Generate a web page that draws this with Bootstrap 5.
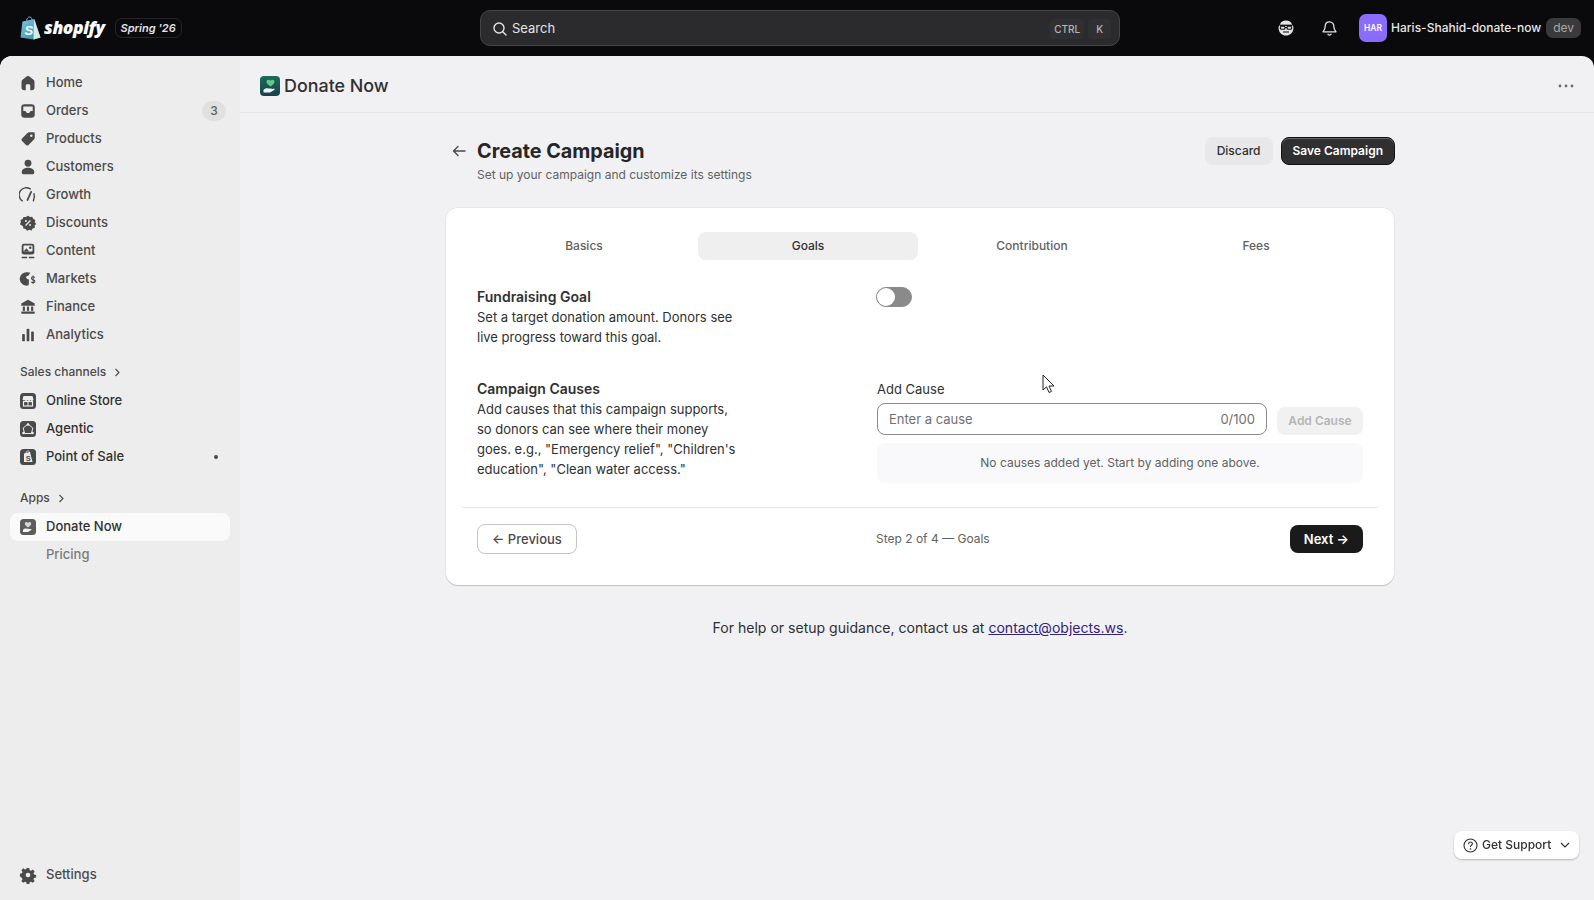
<!DOCTYPE html>
<html lang="en">
<head>
  <meta charset="UTF-8">
  <title>Donate Now - Create Campaign</title>
  <link href="https://cdn.jsdelivr.net/npm/bootstrap@5.3.0/dist/css/bootstrap.min.css" rel="stylesheet">
  <style>
    html, body { height: 100%; }
    body { font-family: Inter, "Liberation Sans", sans-serif; font-size: 13px; background: #0a0a0c; color: #303030; overflow: hidden; }
    svg { display: block; flex-shrink: 0; }

    .topbar { height: 56px; padding-left: 20px; padding-right: 13px; color: #e3e3e3; }
    .top-left { width: 460px; }
    .wordmark { font-family: "Open Sans", "Liberation Sans", sans-serif; font-weight: 800; font-style: italic; font-size: 17.5px; color: #fff; margin-left: 3px; letter-spacing: -.4px; line-height: 1; }
    .season { margin-left: 10px; border: 1px solid #26262a; border-radius: 7px; height: 20px; padding: 0 5px; font-size: 11px; font-weight: 600; font-style: italic; line-height: 18px; color: #e3e3e3; }
    .search-box { width: 640px; height: 36px; background: #2b2b2d; border: 1px solid #444447; border-radius: 10px; padding: 1px 8px 0 11px; color: #e3e3e3; font-size: 13px; }
    .search-box svg { margin-right: 4px; }
    .key { font-size: 10px; font-weight: 500; color: #b5b5b5; background: #303032; border-radius: 4px; padding: 3px 4px; line-height: 14px; }
    .top-right { margin-left: auto; }
    .avatar { width: 28px; height: 28px; border-radius: 7px; background: #8a6cff; color: #fff; font-size: 8.5px; font-weight: 600; }
    .shop-name { font-size: 12px; font-weight: 500; color: #e8e8e8; margin-left: 4px; }
    .dev-tag { margin-left: 5px; height: 20px; padding: 0 7px; border-radius: 7px; background: #3a3a3c; color: #a8a8a8; font-size: 12px; line-height: 20px; }

    .shell { flex: 1; min-height: 0; border-radius: 12px 12px 0 0; overflow: hidden; background: #f1f1f4; }
    .side { width: 240px; background: #ededed; padding: 13px 10px 11px; }
    .side-row { height: 28px; padding-left: 10px; padding-right: 4px; border-radius: 8px; color: #4a4a4a; font-weight: 500; font-size: 13px; text-decoration: none; }
    .side-row svg { margin-right: 10px; }
    .side-row svg.glyph { margin-left: -1px; margin-right: 9px; }
    .side-row.dark { color: #303030; }
    .side-row.on { background: #fafafa; color: #303030; }
    .side-row.sub { color: #7b7b7b; padding-left: 36px; }
    .side-head { height: 20px; padding-left: 10px; font-size: 12px; font-weight: 500; color: #4a4a4a; }
    .count { width: 24px; height: 20px; border-radius: 10px; background: #e0e0e0; color: #616161; font-size: 12px; }
    .dot { width: 4px; height: 4px; border-radius: 50%; background: #4a4a4a; margin-right: 8px; }

    .main-area { min-width: 0; }
    .app-head { height: 57px; padding: 4px 20px 0 20px; border-bottom: 1px solid #e6e6e8; }
    .app-title { font-size: 17.9px; font-weight: 500; color: #303030; margin-left: 4px; }
    .page-wrap { width: 948px; margin-left: 206px; }
    .page-head { padding: 24px 0 0 6px; }
    .page-title { font-size: 19.8px; font-weight: 700; line-height: 28px; margin: 0; color: #262626; }
    .page-sub { font-size: 12px; line-height: 20px; color: #616161; }
    .head-actions { margin-right: -1px; }
    .btn-grey { height: 28px; padding: 0 12px; background: #e8e8e8; border: 0; border-radius: 8px; font-size: 12px; font-weight: 500; color: #303030; }
    .btn-save { height: 28px; padding: 0 11px; background: #303030; border: 1px solid #111; border-radius: 8px; font-size: 12px; font-weight: 600; color: #fff; box-shadow: inset 0 1px 0 rgba(255,255,255,.25); }

    .form-card { margin-top: 23px; background: #fff; border: 0; border-radius: 12px; box-shadow: 0 1px 1px rgba(0,0,0,.18), 0 0 0 1px rgba(0,0,0,.03); padding: 24px 0 31px; }
    .step-tabs { margin: 0 28px; gap: 4px; }
    .step-tabs .nav-link { flex: 1; height: 28px; padding: 0; border-radius: 8px; font-size: 12px; font-weight: 500; color: #616161; line-height: 28px; text-align: center; }
    .step-tabs .nav-link.active { background: #efefef; color: #303030; }
    .form-row { margin: 0 31px; }
    .left-col { width: 400px; flex-shrink: 0; }
    .left-col p { margin: 0; width: 264px; font-size: 13px; line-height: 20px; color: #303030; }
    .left-col h3 { margin: 0; font-size: 14px; font-weight: 600; line-height: 20px; color: #303030; }
    .toggle { width: 36px; height: 20px; margin-left: -1px; border-radius: 10px; background: #8a8a8a; border: 1px solid #8a8a8a; padding: 0; }
    .toggle span { display: block; width: 18px; height: 18px; border-radius: 50%; background: #fff; }
    .field-label { font-size: 13px; line-height: 20px; margin-bottom: 4px; }
    .cause-input { height: 32px; border: 1px solid #8a8a8a; border-radius: 8px; padding: 1px 11px 0; color: #707070; font-size: 13px; background: #fff; }
    .cause-add, .cause-add:disabled { height: 28px; width: 86px; margin-left: 10px; padding: 0; background: #f1f1f1; border: 0; border-radius: 8px; font-size: 12px; font-weight: 600; color: #b5b5b5; opacity: 1; }
    .empty-box { height: 40px; margin-top: 8px; border-radius: 8px; background: #f9f9fb; font-size: 12px; color: #616161; }
    .card-rule { margin: 24px 16px 16px; height: 1px; background: #e6e6e6; }
    .btn-prev { height: 30px; padding: 1px 14px 0; background: #fff; border: 1px solid #c4c4c4; border-radius: 8px; font-size: 13px; font-weight: 500; color: #4a4a4a; }
    .step-text { font-size: 12px; color: #616161; margin-left: -1px; }
    .btn-next { height: 28px; padding: 1px 14px 0; background: #1a1a1a; border: 0; border-radius: 8px; font-size: 13px; font-weight: 600; color: #fff; }
    .help-line { margin-top: 33px; font-size: 14.05px; line-height: 20px; color: #303030; text-align: center; }
    .help-line a { color: #33237a; }

    .support-pill { position: fixed; left: 1454px; top: 831px; width: 125px; height: 28px; background: #fff; border-radius: 8px; box-shadow: 0 1px 2px rgba(0,0,0,.25); font-size: 12px; font-weight: 500; color: #303030; padding: 0 9px; }
    .pointer { position: fixed; left: 1042px; top: 374px; }
  </style>
</head>
<body class="d-flex flex-column">

  <header class="topbar d-flex align-items-center flex-shrink-0">
    <div class="top-left d-flex align-items-center">
      <svg width="21" height="24" viewBox="0 0 21 24">
        <defs><linearGradient id="bagFill" x1="0" y1="0" x2="1" y2="1"><stop offset="0" stop-color="#7fc4e8"/><stop offset="1" stop-color="#2f8f9f"/></linearGradient></defs>
        <path d="M2.500 5.500 L14.500 3 L20.500 21.500 L13.500 23.500 L0.500 21.500 Z" fill="url(#bagFill)"/>
        <path d="M14 3.200 L20.500 21.500 L13.500 23.500 Z" fill="#d8e8e4"/>
        <path d="M6.500 5.500 C6.800 2 8.500 .8 10 1 C11.500 1.200 12 3 12 4.500" fill="none" stroke="#7fb6d6" stroke-width="1"/>
        <text x="4.500" y="18.500" font-family="Liberation Sans, sans-serif" font-size="13" font-weight="700" font-style="italic" fill="#fff">S</text>
      </svg>
      <span class="wordmark">shopify</span>
      <span class="season">Spring '26</span>
    </div>
    <div class="search-box d-flex align-items-center">
      <svg width="16" height="16" viewBox="0 0 16 16" fill="none" stroke="#e3e3e3" stroke-width="1.400" stroke-linecap="round"><circle cx="7" cy="7" r="5"/><path d="M11 11l3 3"/></svg>
      <span>Search</span>
      <span class="key ms-auto">CTRL</span>
      <span class="key ms-1 px-2">K</span>
    </div>
    <div class="top-right d-flex align-items-center">
      <svg width="18" height="18" viewBox="0 0 18 18" style="margin-right:26px"><path d="M3 5.500C3.500 2.800 6 1.500 9 1.500s5.500 1.300 6 4c1.300 1 1.800 3 1.300 5C15.500 14 13 16.500 9 16.500S2.500 14 1.700 10.500C1.200 8.500 1.700 6.500 3 5.500z" fill="#e3e3e3"/><path d="M2.500 6.300h13" stroke="#0a0a0c" stroke-width="1.300"/><rect x="3.300" y="7.300" width="4.700" height="3" rx="1.300" fill="none" stroke="#0a0a0c" stroke-width="1.100"/><rect x="10" y="7.300" width="4.700" height="3" rx="1.300" fill="none" stroke="#0a0a0c" stroke-width="1.100"/><path d="M8 8.500h2M6 13h6" stroke="#0a0a0c" stroke-width="1.200"/></svg>
      <svg width="17" height="17" viewBox="0 0 17 17" fill="none" stroke="#e3e3e3" stroke-width="1.300" stroke-linejoin="round" style="margin-right:21px"><path d="M8.500 1.800c-2.800 0-4.300 2-4.300 4.500 0 3-1.400 4.400-2.200 5.500h13c-.8-1.100-2.200-2.500-2.200-5.500 0-2.500-1.500-4.500-4.300-4.500z"/><path d="M6.700 13.800c.4 1 1 1.400 1.800 1.400s1.400-.4 1.800-1.400"/></svg>
      <span class="avatar d-flex align-items-center justify-content-center">HAR</span>
      <span class="shop-name">Haris-Shahid-donate-now</span>
      <span class="dev-tag">dev</span>
    </div>
  </header>

  <div class="shell d-flex">
    <aside class="side d-flex flex-column flex-shrink-0">
      <a class="side-row d-flex align-items-center" href="#"><svg class="glyph" width="18" height="18" viewBox="0 0 20 20" fill="#4a4a4a"><path d="M8.800 2.600a2 2 0 0 1 2.400 0l5 3.900c.6.500 1 1.200 1 2V15a3 3 0 0 1-3 3h-1.700v-5a1.500 1.500 0 0 0-1.500-1.500H9A1.500 1.500 0 0 0 7.500 13v5H5.800a3 3 0 0 1-3-3V8.500c0-.8.4-1.500 1-2z"/></svg>Home</a>
      <a class="side-row d-flex align-items-center" href="#"><svg class="glyph" width="18" height="18" viewBox="0 0 20 20"><rect x="2.500" y="2.500" width="15" height="15" rx="3.500" fill="#4a4a4a"/><path d="M4.800 5h10.400v5h-2.500c-.4 1.600-1.400 2.300-2.700 2.300s-2.300-.7-2.700-2.300H4.800z" fill="#ededed"/></svg>Orders<span class="count d-flex align-items-center justify-content-center ms-auto">3</span></a>
      <a class="side-row d-flex align-items-center" href="#"><svg class="glyph" width="18" height="18" viewBox="0 0 20 20"><path d="M11.500 2.500H16a1.500 1.500 0 0 1 1.500 1.500v4.500c0 .8-.3 1.500-.9 2.100l-6 6a2 2 0 0 1-2.800 0l-4.400-4.400a2 2 0 0 1 0-2.800l6-6c.6-.6 1.300-.9 2.100-.9z" fill="#4a4a4a"/><circle cx="13.700" cy="6.300" r="1.400" fill="#ededed"/></svg>Products</a>
      <a class="side-row d-flex align-items-center" href="#"><svg class="glyph" width="18" height="18" viewBox="0 0 20 20" fill="#4a4a4a"><circle cx="10" cy="5.800" r="3.800"/><path d="M3 16c0-3.500 2.900-5.200 7-5.200s7 1.700 7 5.200c0 1.300-.9 2-2.200 2H5.200C3.900 18 3 17.300 3 16z"/></svg>Customers</a>
      <a class="side-row d-flex align-items-center" href="#"><svg class="glyph" width="18" height="18" viewBox="0 0 20 20" fill="none" stroke="#4a4a4a" stroke-width="1.600" stroke-linecap="round"><path d="M3.700 16.500A7.800 7.800 0 0 1 12.500 3.200"/><path d="M16.700 8.500c.7 2.800.4 5.700-.7 8"/><path d="M9.500 15.500L13.500 6.500" stroke-width="2"/></svg>Growth</a>
      <a class="side-row d-flex align-items-center" href="#"><svg class="glyph" width="18" height="18" viewBox="0 0 20 20"><path d="M10 2l2.200 1.300 2.500-.2 1 2.300 2.300 1.200-.4 2.500L19 11l-1.600 1.900.2 2.500-2.400.8-1.400 2.100-2.500-.7-2.300.9-1.700-1.800-2.500-.6-.3-2.500L1 11.500l1.100-2.200-.4-2.500L4 5.500 5 3.200l2.500 0z" fill="#4a4a4a"/><path d="M7.300 12.700l5.400-5.400" stroke="#ededed" stroke-width="1.400"/><circle cx="7.700" cy="7.700" r="1.100" fill="#ededed"/><circle cx="12.300" cy="12.300" r="1.100" fill="#ededed"/></svg>Discounts</a>
      <a class="side-row d-flex align-items-center" href="#"><svg class="glyph" width="18" height="18" viewBox="0 0 20 20"><rect x="3" y="2" width="14" height="12" rx="2.500" fill="#4a4a4a"/><rect x="5" y="4" width="10" height="6.500" rx="1" fill="#ededed"/><circle cx="12.500" cy="6.300" r="1.400" fill="#4a4a4a"/><path d="M5 10.500l3.300-3.500 3 3.500z" fill="#4a4a4a"/><path d="M3 17.300h6M11 17.300h6" stroke="#4a4a4a" stroke-width="1.700"/></svg>Content</a>
      <a class="side-row d-flex align-items-center" href="#"><svg class="glyph" width="18" height="18" viewBox="0 0 20 20"><path d="M9.500 2.500a7.500 7.500 0 0 1 3 .6L10.500 6 7.500 7.500 9 10l2 .5v2.500l-.3 4A7.500 7.500 0 1 1 9.500 2.500z" fill="#4a4a4a"/><path d="M17.500 8.500c-.5-.8-1.200-1-1.900-1-1 0-1.800.7-1.800 1.600 0 2.100 3.900 1.200 3.900 3.400 0 1-.9 1.600-2 1.600-.8 0-1.600-.4-2-1.100M15.700 6v9.500" fill="none" stroke="#4a4a4a" stroke-width="1.200"/></svg>Markets</a>
      <a class="side-row d-flex align-items-center" href="#"><svg class="glyph" width="18" height="18" viewBox="0 0 20 20" fill="#4a4a4a"><path d="M10 2l7.500 4.200v2.300h-15V6.200z"/><rect x="4.200" y="9.500" width="2.400" height="4.800"/><rect x="8.800" y="9.500" width="2.400" height="4.800"/><rect x="13.400" y="9.500" width="2.400" height="4.800"/><rect x="2.500" y="15" width="15" height="2.500" rx=".8"/></svg>Finance</a>
      <a class="side-row d-flex align-items-center" href="#"><svg class="glyph" width="18" height="18" viewBox="0 0 20 20" fill="#4a4a4a"><rect x="3.500" y="9" width="3" height="8" rx="1"/><rect x="8.500" y="3" width="3" height="14" rx="1"/><rect x="13.500" y="6" width="3" height="11" rx="1"/></svg>Analytics</a>

      <div class="side-head d-flex align-items-center" style="margin-top:13px">Sales channels<svg class="ms-2" width="7" height="9" viewBox="0 0 7 9" fill="none" stroke="#4a4a4a" stroke-width="1.100"><path d="M1.500 1l3.500 3.500L1.500 8"/></svg></div>
      <a class="side-row dark d-flex align-items-center" style="margin-top:5px" href="#"><svg width="16" height="16" viewBox="0 0 16 16"><rect width="16" height="16" rx="3.500" fill="#4a4a4a"/><path d="M3.500 3h9l1 3.500a1.600 1.600 0 0 1-3 .6 1.900 1.900 0 0 1-3 0 1.900 1.900 0 0 1-3 0 1.600 1.600 0 0 1-2-.6z" fill="#ededed"/><rect x="3.500" y="8.500" width="9" height="4.500" fill="none" stroke="#ededed" stroke-width="1.200"/><path d="M8 8.500V13" stroke="#ededed"/></svg>Online Store</a>
      <a class="side-row dark d-flex align-items-center" href="#"><svg width="16" height="16" viewBox="0 0 16 16"><rect width="16" height="16" rx="3.500" fill="#4a4a4a"/><path d="M8 3L3.200 7l1.300 5.500h7L12.800 7z" fill="none" stroke="#ededed" stroke-width="1"/><circle cx="8" cy="3.500" r="1.300" fill="#ededed"/><circle cx="3.500" cy="12" r="1.300" fill="#ededed"/><circle cx="12.500" cy="12" r="1.300" fill="#ededed"/></svg>Agentic</a>
      <a class="side-row dark d-flex align-items-center" href="#"><svg width="16" height="16" viewBox="0 0 16 16"><rect width="16" height="16" rx="3.500" fill="#4a4a4a"/><path d="M4 4.500L10 3l2.500 10H4z" fill="#ededed"/><path d="M6 4C6.200 2.500 7 2 8 2s1.500.7 1.600 1.800" fill="none" stroke="#ededed" stroke-width=".8"/><text x="5.800" y="11.500" font-family="Liberation Sans, sans-serif" font-size="7.500" font-weight="700" fill="#4a4a4a">S</text></svg>Point of Sale<span class="dot ms-auto"></span></a>

      <div class="side-head d-flex align-items-center" style="margin-top:17px">Apps<svg class="ms-2" width="7" height="9" viewBox="0 0 7 9" fill="none" stroke="#4a4a4a" stroke-width="1.100"><path d="M1.500 1l3.500 3.500L1.500 8"/></svg></div>
      <a class="side-row on d-flex align-items-center" style="margin-top:5px" href="#"><svg width="16" height="16" viewBox="0 0 16 16"><rect width="16" height="16" rx="3.500" fill="#5c5c5c"/><path d="M8 8.500C6 7 4.800 6 4.800 4.700 4.800 3.700 5.600 3 6.500 3c.7 0 1.200.4 1.500.9.300-.5.800-.9 1.500-.9.900 0 1.700.7 1.700 1.700C11.200 6 10 7 8 8.500z" fill="#d5d5d5"/><path d="M3 11c1.200-1.400 2.500-1.700 4-1.200h2c.7 0 .7 1 0 1.100h-1.500l3-.9c1-.3 1.500.6.700 1.100L8 13H3z" fill="#f4f4f4"/></svg>Donate Now</a>
      <a class="side-row sub d-flex align-items-center" href="#">Pricing</a>

      <a class="side-row d-flex align-items-center mt-auto" href="#"><svg class="glyph" width="18" height="18" viewBox="0 0 20 20"><path d="M8.400 1.500h3.200l.5 2.500 1.700.7 2.100-1.400 2.300 2.300-1.400 2.100.7 1.700 2.500.5v3.200l-2.500.5-.7 1.700 1.400 2.100-2.300 2.300-2.100-1.400-1.700.7-.5 2.500H8.400l-.5-2.500-1.700-.7-2.100 1.400-2.300-2.300 1.400-2.100-.7-1.700L0 11.600V8.400l2.500-.5.700-1.700-1.400-2.100 2.300-2.300 2.100 1.400 1.700-.7z" transform="translate(1 1) scale(.9)" fill="#4a4a4a"/><circle cx="10" cy="10" r="2.600" fill="#ededed"/></svg>Settings</a>
    </aside>

    <main class="main-area flex-grow-1">
      <div class="app-head d-flex align-items-center">
        <svg width="20" height="20" viewBox="0 0 20 20">
          <defs><linearGradient id="appFill" x1="0" y1="0" x2="0" y2="1"><stop offset="0" stop-color="#1f6b58"/><stop offset="1" stop-color="#17404f"/></linearGradient></defs>
          <rect width="20" height="20" rx="4" fill="url(#appFill)"/>
          <path d="M10.500 10.500C8 8.700 6.500 7.400 6.500 5.800 6.500 4.600 7.400 3.700 8.500 3.700c.9 0 1.600.5 2 1.100.4-.6 1.100-1.100 2-1.100 1.100 0 2 .9 2 2.100 0 1.600-1.500 2.900-4 4.700z" fill="#62c98a"/>
          <path d="M3.500 14c1.500-1.800 3.100-2.200 5-1.500h2.700c.9 0 .9 1.300 0 1.400H9.300l4-1.200c1.300-.4 1.900.8.900 1.400L10 16.500H3.500z" fill="#f2f2f2"/>
        </svg>
        <span class="app-title">Donate Now</span>
        <svg class="ms-auto" width="16" height="4" viewBox="0 0 16 4" fill="#6b6b6b"><circle cx="2" cy="2" r="1.400"/><circle cx="8" cy="2" r="1.400"/><circle cx="14" cy="2" r="1.400"/></svg>
      </div>

      <div class="page-wrap">
        <div class="page-head d-flex align-items-start">
          <svg class="mt-2" width="14" height="12" viewBox="0 0 14 12" fill="none" stroke="#4a4a4a" stroke-width="1.400" stroke-linecap="round" stroke-linejoin="round" style="margin-right:11px"><path d="M13 6H1.500M6 1.500L1.500 6 6 10.500"/></svg>
          <div>
            <h1 class="page-title">Create Campaign</h1>
            <div class="page-sub">Set up your campaign and customize its settings</div>
          </div>
          <div class="head-actions ms-auto d-flex gap-2">
            <button type="button" class="btn btn-grey">Discard</button>
            <button type="button" class="btn btn-save">Save Campaign</button>
          </div>
        </div>

        <div class="card form-card">
          <nav class="nav step-tabs">
            <a class="nav-link" href="#">Basics</a>
            <a class="nav-link active" href="#">Goals</a>
            <a class="nav-link" href="#">Contribution</a>
            <a class="nav-link" href="#">Fees</a>
          </nav>

          <div class="form-row d-flex" style="margin-top:27px">
            <div class="left-col">
              <h3>Fundraising Goal</h3>
              <p>Set a target donation amount. Donors see live progress toward this goal.</p>
            </div>
            <div><button type="button" class="toggle d-block" aria-label="Fundraising goal"><span></span></button></div>
          </div>

          <div class="form-row d-flex" style="margin-top:32px">
            <div class="left-col">
              <h3>Campaign Causes</h3>
              <p>Add causes that this campaign supports, so donors can see where their money goes. e.g., "Emergency relief", "Children's education", "Clean water access."</p>
            </div>
            <div class="flex-grow-1">
              <div class="field-label">Add Cause</div>
              <div class="d-flex align-items-end">
                <div class="cause-input flex-grow-1 d-flex align-items-center justify-content-between"><span>Enter a cause</span><span>0/100</span></div>
                <button type="button" class="btn cause-add" disabled>Add Cause</button>
              </div>
              <div class="empty-box d-flex align-items-center justify-content-center">No causes added yet. Start by adding one above.</div>
            </div>
          </div>

          <div class="card-rule"></div>

          <div class="form-row d-flex align-items-center">
            <div class="left-col"><button type="button" class="btn btn-prev">← Previous</button></div>
            <span class="step-text">Step 2 of 4 — Goals</span>
            <button type="button" class="btn btn-next ms-auto">Next →</button>
          </div>
        </div>

        <p class="help-line">For help or setup guidance, contact us at <a href="#">contact@objects.ws</a>.</p>
      </div>
    </main>
  </div>

  <div class="support-pill d-flex align-items-center">
    <svg width="15" height="15" viewBox="0 0 15 15" fill="none" stroke="#303030" stroke-width="1.100" stroke-linecap="round"><circle cx="7.500" cy="7.500" r="6.500"/><path d="M5.600 5.800c0-1.100.9-1.800 1.900-1.800s1.900.7 1.900 1.700c0 1.500-1.900 1.500-1.900 2.900"/><circle cx="7.500" cy="11" r=".3"/></svg>
    <span class="ms-1">Get Support</span>
    <svg class="ms-auto" width="10" height="6" viewBox="0 0 10 6" fill="none" stroke="#303030" stroke-width="1.200"><path d="M1 1l4 4 4-4"/></svg>
  </div>

  <svg class="pointer" width="13" height="20" viewBox="0 0 13 20"><path d="M1 1v15l3.500-3.200L7 18.500l2.500-1.100L7 12h5z" fill="#fff" stroke="#222" stroke-width="1"/></svg>

</body>
</html>
